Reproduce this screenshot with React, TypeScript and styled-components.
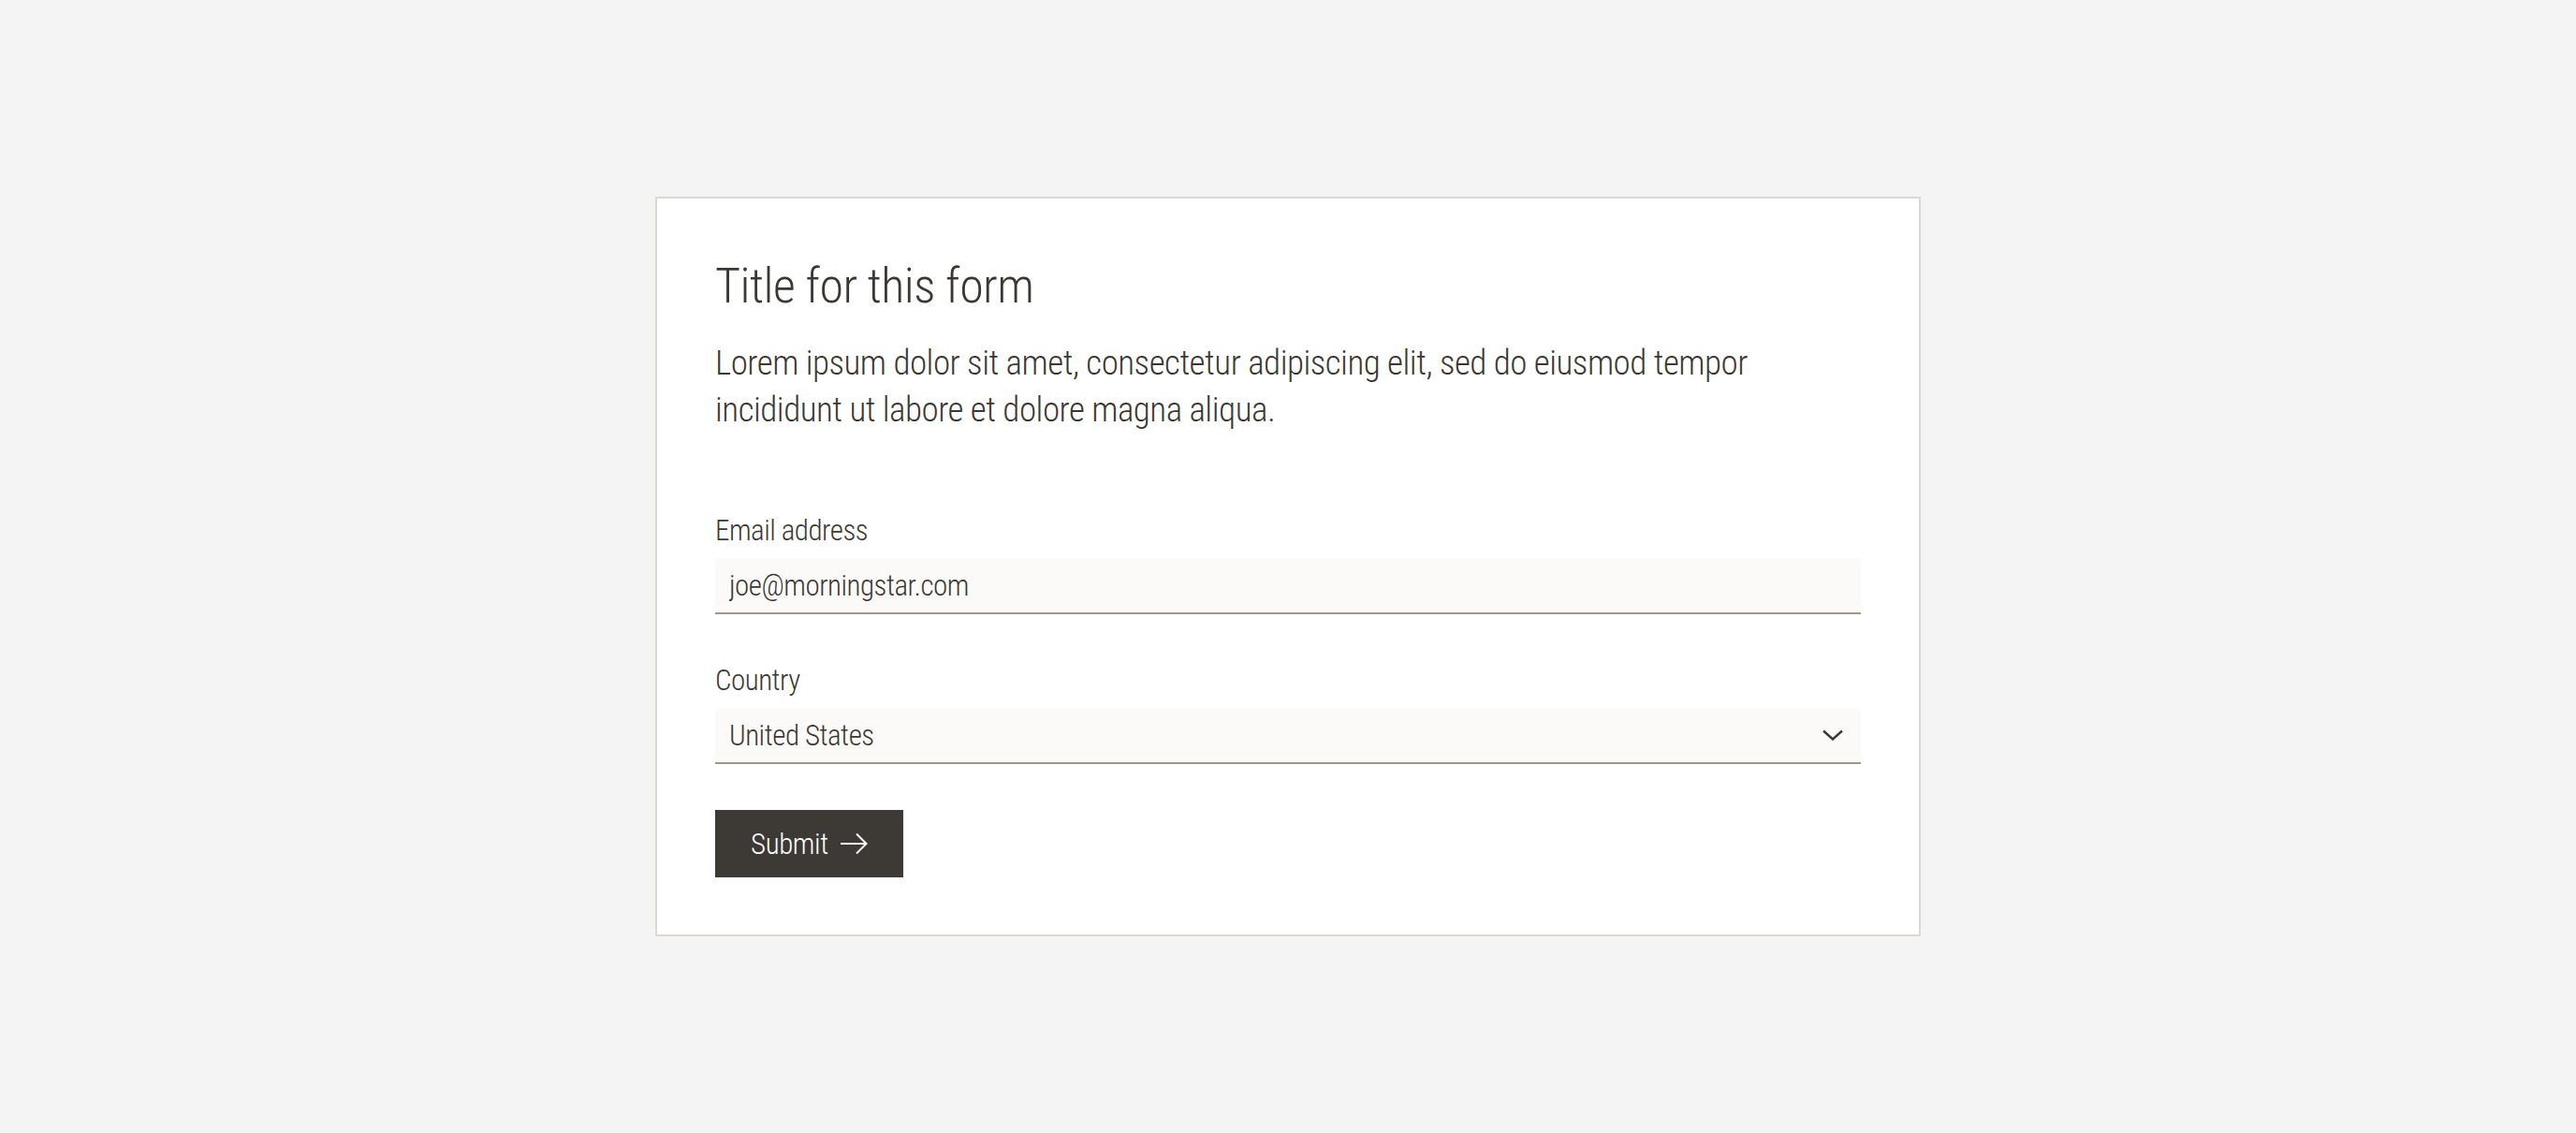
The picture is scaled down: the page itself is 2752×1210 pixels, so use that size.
import React from "react"
import styled, { createGlobalStyle } from "styled-components"

const GlobalStyle = createGlobalStyle`
    html, body {
        margin: 0;
        padding: 0;
        background: #f4f4f4;
    }
    body {
        font-family: Roboto, "Open Sans", "Liberation Sans", sans-serif;
        font-stretch: 75%;
        font-weight: 330;
        color: #3b3834;
    }
    * {
        box-sizing: border-box;
    }
`

const StyledPage = styled.main`
    min-height: 100vh;
    display: flex;
    align-items: center;
    justify-content: center;
`

const StyledCard = styled.form`
    width: 1352px;
    background: #ffffff;
    border: 2px solid #dcd9d5;
    padding: 61px 62px 61px;
    display: flex;
    flex-direction: column;
`

const StyledTitle = styled.h1`
    font-weight: 300;
    font-size: 52px;
    letter-spacing: -0.55px;
    line-height: 66px;
    margin: 0 0 24px;
    color: #3b3834;
`

const StyledIntro = styled.p`
    font-size: 37px;
    letter-spacing: -0.5px;
    line-height: 50px;
    margin: 0 0 84px;
    max-width: 1160px;
`

const StyledField = styled.div<{ $last?: boolean }>`
    display: flex;
    flex-direction: column;
    margin-bottom: ${({ $last }) => ($last ? "49px" : "51px")};
`

const StyledLabel = styled.label`
    font-size: 31px;
    letter-spacing: -0.5px;
    line-height: 40px;
    margin-bottom: 9px;
`

const StyledInput = styled.input`
    height: 60px;
    width: 100%;
    border: none;
    border-bottom: 2px solid #9b988f;
    background: #fbfaf8;
    padding: 0 15px;
    font-family: inherit;
    font-stretch: 75%;
    font-weight: 330;
    font-size: 31px;
    letter-spacing: -0.5px;
    color: #3b3834;
    outline: none;
`

const StyledSelectWrap = styled.div`
    position: relative;
    height: 60px;
    background: #fbfaf8;
    border-bottom: 2px solid #9b988f;
`

const StyledSelect = styled.select`
    appearance: none;
    width: 100%;
    height: 100%;
    border: none;
    background: transparent;
    padding: 0 60px 0 15px;
    font-family: inherit;
    font-stretch: 75%;
    font-weight: 330;
    font-size: 31px;
    letter-spacing: -0.5px;
    color: #3b3834;
    outline: none;
`

const StyledChevron = styled.svg`
    position: absolute;
    right: 19px;
    top: 50%;
    transform: translateY(-50%);
    pointer-events: none;
`

const StyledButton = styled.button`
    align-self: flex-start;
    display: flex;
    align-items: center;
    gap: 12px;
    height: 72px;
    padding: 0 38px;
    border: none;
    background: #3d3935;
    color: #ffffff;
    font-family: inherit;
    font-stretch: 75%;
    font-weight: 300;
    font-size: 31px;
    letter-spacing: -0.4px;
    cursor: pointer;
`

const App: React.FC = () => {
    return (
        <>
            <GlobalStyle />
            <StyledPage>
                <StyledCard onSubmit={(e) => e.preventDefault()}>
                    <StyledTitle>Title for this form</StyledTitle>
                    <StyledIntro>
                        Lorem ipsum dolor sit amet, consectetur adipiscing elit, sed do eiusmod tempor incididunt ut labore et dolore magna aliqua.
                    </StyledIntro>
                    <StyledField>
                        <StyledLabel htmlFor="email">Email address</StyledLabel>
                        <StyledInput id="email" type="email" defaultValue="joe@morningstar.com" />
                    </StyledField>
                    <StyledField $last>
                        <StyledLabel htmlFor="country">Country</StyledLabel>
                        <StyledSelectWrap>
                            <StyledSelect id="country" defaultValue="us">
                                <option value="us">United States</option>
                                <option value="ca">Canada</option>
                                <option value="uk">United Kingdom</option>
                            </StyledSelect>
                            <StyledChevron width="22" height="12" viewBox="0 0 22 12" fill="none">
                                <path d="M1 1.5 L11 10.5 L21 1.5" stroke="#3b3834" strokeWidth="2.4" />
                            </StyledChevron>
                        </StyledSelectWrap>
                    </StyledField>
                    <StyledButton type="submit">
                        Submit
                        <svg width="30" height="24" viewBox="0 0 30 24" fill="none">
                            <path d="M1 12 H28.5 M18 1.5 L28.5 12 L18 22.5" stroke="#ffffff" strokeWidth="2" />
                        </svg>
                    </StyledButton>
                </StyledCard>
            </StyledPage>
        </>
    )
}

export default App
